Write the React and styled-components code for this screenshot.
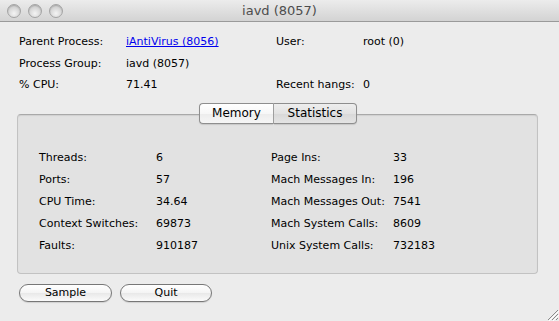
import { createGlobalStyle } from "styled-components";
import styled from "styled-components";

const GlobalStyle = createGlobalStyle`
  html, body {
    margin: 0;
    padding: 0;
    background: #ececec;
  }
  body {
    font-family: "DejaVu Sans", "Liberation Sans", sans-serif;
    font-size: 11px;
    color: #000;
  }
`;

const Window = styled.div`
  position: relative;
  width: 559px;
  height: 321px;
  background: #ececec;
  display: flex;
  flex-direction: column;
  overflow: hidden;
`;

const TitleBar = styled.div`
  flex-shrink: 0;
  height: 21px;
  border-bottom: 1px solid #9a9a9a;
  background: linear-gradient(#ececec, #d3d3d3);
  display: flex;
  align-items: center;
`;

const Lights = styled.div`
  display: flex;
  gap: 7px;
  padding-left: 7px;
`;

const Light = styled.span`
  width: 12px;
  height: 12px;
  border-radius: 50%;
  border: 1px solid #a4a4a4;
  background: radial-gradient(circle at 50% 70%, #f4f4f4 0%, #d6d6d6 55%, #bcbcbc 100%);
  box-shadow: inset 0 1px 1px rgba(0, 0, 0, 0.15);
`;

const Title = styled.div`
  flex: 1;
  text-align: center;
  font-size: 13px;
  color: #4d4d4d;
  margin-right: 63px;
`;

const Body = styled.div`
  padding: 9px 21px 0 17px;
  display: flex;
  flex-direction: column;
`;

const InfoGrid = styled.div`
  display: grid;
  grid-template-columns: 107px 150px 87px 1fr;
  grid-auto-rows: 21.5px;
  align-items: center;
  padding-left: 2px;
`;

const Cell = styled.span`
  white-space: nowrap;
`;

const Link = styled.a`
  color: #0000ee;
  text-decoration: underline;
  cursor: pointer;
`;

const TabStrip = styled.div`
  position: relative;
  z-index: 1;
  margin-top: 7px;
  display: flex;
  justify-content: center;
  padding-left: 1px;
`;

const Tab = styled.div`
  height: 19px;
  border: 1px solid #8e8e8e;
  border-left-width: ${(p) => (p.$first ? "1px" : "0")};
  border-right-width: ${(p) => (p.$first ? "0" : "1px")};
  border-radius: ${(p) => (p.$first ? "4px 0 0 4px" : "0 4px 4px 0")};
  width: ${(p) => p.$width}px;
  display: flex;
  align-items: center;
  justify-content: center;
  font-size: 12px;
  background: ${(p) =>
    p.$selected
      ? "linear-gradient(#eeeeee, #e2e2e2 50%, #d8d8d8 51%, #e4e4e4)"
      : "linear-gradient(#ffffff, #f7f7f7 50%, #ececec 51%, #f6f6f6)"};
  box-shadow: 0 1px 1px rgba(0, 0, 0, 0.12);
`;

const Divider = styled.span`
  width: 1px;
  height: 21px;
  background: #a0a0a0;
`;

const GroupBox = styled.div`
  margin-top: -10px;
  height: 160px;
  box-sizing: border-box;
  border: 1px solid #c2c2c2;
  border-top-color: #a9a9a9;
  border-radius: 4px;
  background: #e2e2e2;
  padding: 32px 0 0 21px;
  box-shadow: inset 0 1px 1px rgba(0, 0, 0, 0.08);
`;

const StatsGrid = styled.div`
  display: grid;
  grid-template-columns: 117px 115px 122px 1fr;
  grid-auto-rows: 22px;
  align-items: center;
`;

const ButtonRow = styled.div`
  display: flex;
  gap: 8px;
  margin-top: 10px;
  padding-left: 2px;
`;

const Button = styled.button`
  width: ${(p) => p.$width}px;
  height: 18px;
  border: 1px solid #777;
  border-radius: 9px;
  background: linear-gradient(#ffffff, #f4f4f4 50%, #e8e8e8 51%, #fbfbfb);
  font-family: inherit;
  font-size: 11px;
  color: #000;
  padding: 0;
  box-shadow: 0 1px 1px rgba(0, 0, 0, 0.12);
`;

const Grip = styled.svg`
  position: absolute;
  right: 0;
  bottom: 0;
`;

const info = [
  ["Parent Process:", "iAntiVirus (8056)", "User:", "root (0)"],
  ["Process Group:", "iavd (8057)", "", ""],
  ["% CPU:", "71.41", "Recent hangs:", "0"],
];

const stats = [
  ["Threads:", "6", "Page Ins:", "33"],
  ["Ports:", "57", "Mach Messages In:", "196"],
  ["CPU Time:", "34.64", "Mach Messages Out:", "7541"],
  ["Context Switches:", "69873", "Mach System Calls:", "8609"],
  ["Faults:", "910187", "Unix System Calls:", "732183"],
];

export default function App() {
  return (
    <Window>
      <GlobalStyle />
      <TitleBar>
        <Lights>
          <Light />
          <Light />
          <Light />
        </Lights>
        <Title>iavd (8057)</Title>
      </TitleBar>
      <Body>
        <InfoGrid>
          {info.map((row, i) =>
            row.map((text, j) => (
              <Cell key={`${i}-${j}`}>
                {i === 0 && j === 1 ? <Link>{text}</Link> : text}
              </Cell>
            ))
          )}
        </InfoGrid>
        <TabStrip>
          <Tab $first $width={73}>
            Memory
          </Tab>
          <Divider />
          <Tab $selected $width={82}>
            Statistics
          </Tab>
        </TabStrip>
        <GroupBox>
          <StatsGrid>
            {stats.map((row, i) =>
              row.map((text, j) => <Cell key={`${i}-${j}`}>{text}</Cell>)
            )}
          </StatsGrid>
        </GroupBox>
        <ButtonRow>
          <Button $width={93}>Sample</Button>
          <Button $width={92}>Quit</Button>
        </ButtonRow>
      </Body>
      <Grip width="14" height="14" viewBox="0 0 14 14">
        <g stroke="#8a8a8a" strokeWidth="1">
          <line x1="13" y1="3" x2="3" y2="13" />
          <line x1="13" y1="7" x2="7" y2="13" />
          <line x1="13" y1="11" x2="11" y2="13" />
        </g>
        <g stroke="#ffffff" strokeWidth="1">
          <line x1="14" y1="4" x2="4" y2="14" />
          <line x1="14" y1="8" x2="8" y2="14" />
        </g>
      </Grip>
    </Window>
  );
}
